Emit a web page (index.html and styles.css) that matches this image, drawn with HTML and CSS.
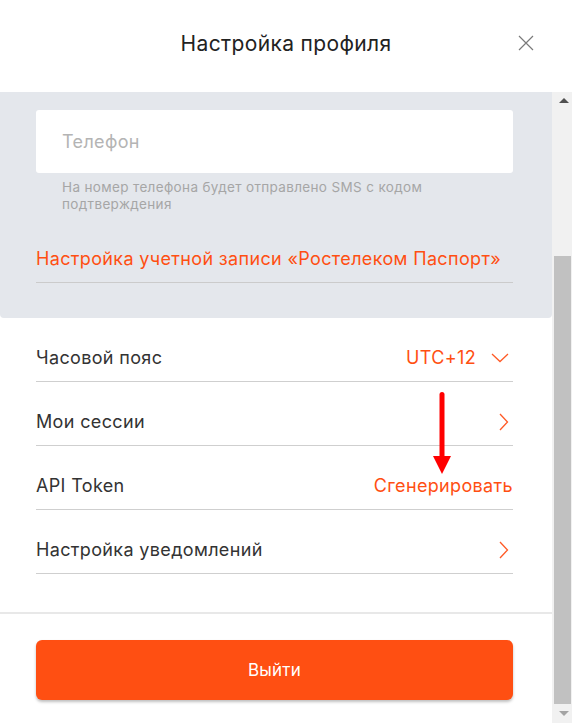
FILE: index.html
```html
<!DOCTYPE html>
<html lang="ru">
<head>
  <meta charset="UTF-8" />
  <title>Настройка профиля</title>
  <link rel="stylesheet" href="styles.css">
</head>
<body>
  <div class="modal">
    <header class="modal-header">
      <span></span>
      <h2>Настройка профиля</h2>
      <button class="close" type="button" aria-label="Закрыть">
        <svg width="16" height="16" viewBox="0 0 16 16"><path d="M1 1 L15 15 M15 1 L1 15" stroke="#7a7a7a" stroke-width="1.2" fill="none"/></svg>
      </button>
    </header>

    <div class="modal-body">
      <div class="content">
        <section class="account">
          <input class="phone" type="text" placeholder="Телефон">
          <p class="hint">На номер телефона будет отправлено SMS с кодом подтверждения</p>
          <a class="passport" href="#">Настройка учетной записи «Ростелеком Паспорт»</a>
        </section>

        <ul class="settings">
          <li class="row">
            <span>Часовой пояс</span>
            <span class="value">UTC+12
              <svg class="chev-down" width="18" height="10" viewBox="0 0 18 10"><path d="M1 1 L9 8.5 L17 1" stroke="#ff5a26" stroke-width="1.3" fill="none"/></svg>
            </span>
          </li>
          <li class="row">
            <span>Мои сессии</span>
            <svg class="chev-right" width="10" height="18" viewBox="0 0 10 18"><path d="M1 1 L8.5 9 L1 17" stroke="#ff5a26" stroke-width="1.3" fill="none"/></svg>
          </li>
          <li class="row">
            <span>API Token</span>
            <a class="value" href="#">Сгенерировать</a>
          </li>
          <li class="row">
            <span>Настройка уведомлений</span>
            <svg class="chev-right" width="10" height="18" viewBox="0 0 10 18"><path d="M1 1 L8.5 9 L1 17" stroke="#ff5a26" stroke-width="1.3" fill="none"/></svg>
          </li>
        </ul>

        <footer class="footer">
          <button class="logout" type="button">Выйти</button>
        </footer>
      </div>

      <div class="scrollbar">
        <div class="sb-btn"><i class="tri-up"></i></div>
        <div class="sb-space"></div>
        <div class="sb-thumb"></div>
        <div class="sb-btn sb-btn-down"><i class="tri-down"></i></div>
      </div>
    </div>

    <!-- annotation arrow -->
    <svg class="pointer" width="22" height="84" viewBox="0 0 22 84">
      <path d="M11 2.5 L11 66" stroke="#ff0000" stroke-width="5" stroke-linecap="round" fill="none"/>
      <path d="M2 64 L20 64 L11 82 Z" fill="#ff0000"/>
    </svg>
  </div>
</body>
</html>
```

FILE: styles.css
```css
* {
  box-sizing: border-box;
}

body {
  margin: 0;
  background: #fff;
  font-family: Inter, 'Liberation Sans', Arial, sans-serif;
  letter-spacing: 0.35px;
  color: #333;
}

.modal {
  position: relative;
  width: 572px;
  height: 723px;
  display: flex;
  flex-direction: column;
  overflow: hidden;
}

/* Header */
.modal-header {
  height: 92px;
  flex: 0 0 92px;
  display: grid;
  grid-template-columns: 1fr auto 1fr;
  align-items: center;
}

.modal-header h2 {
  margin: 0 0 6px;
  font-size: 21px;
  font-weight: 400;
  color: #222;
}

.close {
  justify-self: end;
  margin: 0 38px 6px 0;
  padding: 0;
  border: none;
  background: none;
  width: 16px;
  height: 16px;
  cursor: pointer;
}

.close svg {
  display: block;
}

/* Body with fake scrollbar */
.modal-body {
  flex: 1;
  display: flex;
  min-height: 0;
}

.content {
  flex: 1;
  display: flex;
  flex-direction: column;
}

.account {
  background: #e4e7ec;
  padding: 18px 39px 35px 36px;
  border-radius: 0 0 4px 4px;
}

.phone {
  display: block;
  width: 100%;
  height: 63px;
  border: none;
  border-radius: 3px;
  background: #fff;
  padding: 0 26px;
  font-family: inherit;
  font-size: 18px;
  letter-spacing: 0.35px;
  color: #333;
  outline: none;
}

.phone::placeholder {
  color: #b4b4b4;
}

.hint {
  margin: 6px 0 0;
  padding: 0 26px;
  font-size: 13.5px;
  line-height: 17px;
  color: #a6a6a6;
}

.passport {
  display: block;
  margin-top: 34px;
  padding-bottom: 11px;
  border-bottom: 1px solid #cbcbcb;
  font-size: 18px;
  line-height: 24px;
  color: #ff4f12;
  text-decoration: none;
}

.settings {
  list-style: none;
  margin: 0;
  padding: 0 39px 0 36px;
}

.row {
  display: flex;
  align-items: center;
  justify-content: space-between;
  padding: 28px 0 11px;
  border-bottom: 1px solid #cfcfcf;
  font-size: 18px;
  line-height: 24px;
  color: #333;
}

.value {
  display: flex;
  align-items: center;
  gap: 15px;
  color: #ff4f12;
  text-decoration: none;
}

.chev-down {
  margin-right: 4px;
}

.chev-right {
  margin-right: 4px;
}

.footer {
  margin-top: 38px;
  border-top: 2px solid #e8e8e8;
  padding: 26px 39px 0 36px;
}

.logout {
  display: block;
  width: 100%;
  height: 60px;
  border: none;
  border-radius: 6px;
  background: #ff4f12;
  box-shadow: 0 2px 3px rgba(0, 0, 0, 0.25);
  color: #fff;
  font-family: inherit;
  font-size: 17px;
  letter-spacing: 0.2px;
  cursor: pointer;
}

.scrollbar {
  width: 20px;
  flex: 0 0 20px;
  background: #f1f1f1;
  display: flex;
  flex-direction: column;
}

.sb-btn {
  height: 17px;
  flex: 0 0 17px;
  display: flex;
  align-items: center;
  justify-content: center;
  padding-left: 3px;
}

.sb-btn-down {
  height: 19px;
  flex: 0 0 19px;
}

.sb-space {
  flex: 0 0 147px;
}

.sb-thumb {
  flex: 1;
  margin: 0 1px 0 2px;
  background: #c1c1c1;
}

.tri-up {
  width: 0;
  height: 0;
  border-left: 5px solid transparent;
  border-right: 5px solid transparent;
  border-bottom: 5px solid #505050;
}

.tri-down {
  width: 0;
  height: 0;
  border-left: 5px solid transparent;
  border-right: 5px solid transparent;
  border-top: 5px solid #a3a3a3;
}

/* red annotation arrow over the list */
.pointer {
  position: absolute;
  left: 431px;
  top: 392px;
}
```
